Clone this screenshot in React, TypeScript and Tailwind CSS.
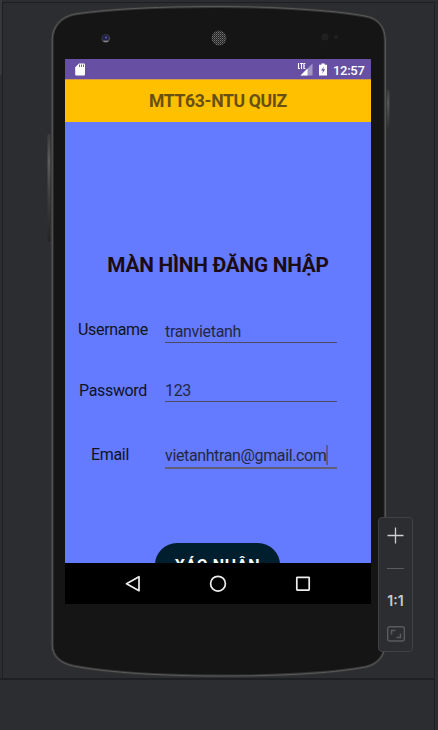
function PhoneBody() {
  return (
    <svg className="absolute inset-0" width="438" height="680" viewBox="0 0 438 680" fill="none" aria-hidden="true">
      <defs>
        <linearGradient id="leftKey" x1="0" y1="134" x2="0" y2="241" gradientUnits="userSpaceOnUse">
          <stop stopColor="#3a3a3a" />
          <stop offset=".25" stopColor="#5c5c5a" />
          <stop offset=".6" stopColor="#3c3c3c" />
          <stop offset="1" stopColor="#242424" />
        </linearGradient>
        <linearGradient id="rightKey" x1="0" y1="90" x2="0" y2="132" gradientUnits="userSpaceOnUse">
          <stop stopColor="#3c3c3c" />
          <stop offset=".3" stopColor="#555555" />
          <stop offset="1" stopColor="#292929" />
        </linearGradient>
        <pattern id="mesh" width="2" height="2" patternUnits="userSpaceOnUse">
          <rect width="2" height="2" fill="#242424" />
          <rect width="1" height="1" fill="#747474" />
          <rect x="1" y="1" width="1" height="1" fill="#4c4c4c" />
        </pattern>
      </defs>
      <rect x="47.500" y="134" width="3" height="107" rx="1" fill="url(#leftKey)" />
      <rect x="386" y="90" width="3.5" height="42" rx="1.5" fill="url(#rightKey)" />
      <path
        d="M52.200 40C52.200 27 60 17 75 14C112 8.500 166 6.500 218 6.500C271 6.500 334 10 365 16C378 18 385 27 385.300 40V642C385.300 656 378 664 366 667C329 674 275 676 218 676C166 676 110 673 73 666C60 663 52.200 656 52.200 645Z"
        fill="#151515"
        stroke="#353535"
        strokeWidth="3"
      />
      <path
        d="M52.200 40C52.200 27 60 17 75 14C112 8.500 166 6.500 218 6.500C271 6.500 334 10 365 16C378 18 385 27 385.300 40V642C385.300 656 378 664 366 667C329 674 275 676 218 676C166 676 110 673 73 666C60 663 52.200 656 52.200 645Z"
        stroke="#5a5a5a"
      />
      <circle cx="105.800" cy="38.500" r="4.300" fill="#48484c" />
      <circle cx="105.500" cy="38" r="3.300" fill="#202048" />
      <circle cx="106" cy="37.500" r="1" fill="#6666a8" />
      <path d="M103.500 41.200H108" stroke="#a0a09a" />
      <circle cx="219" cy="38" r="7.500" fill="url(#mesh)" />
      <circle cx="325" cy="37" r="3.500" fill="#202020" />
      <circle cx="336" cy="37" r="2" fill="#222222" />
    </svg>
  );
}

function StatusBar() {
  return (
    <div className="flex h-[20px] items-center bg-[#6750a3] pl-[10px] pr-[7px]">
      <svg width="11" height="13" viewBox="0 0 11 13" aria-hidden="true">
        <path d="M4 0.500H9Q10 0.500 10 1.500V11.500Q10 12.500 9 12.500H1.200Q.2 12.500 .2 11.500V4.300Z" fill="#fff" />
        <path d="M4.500 1.500V4M6.500 1.500V4M8.500 1.500V4" stroke="#6750a3" strokeWidth=".9" />
      </svg>
      <div className="ml-auto flex items-center">
        <svg width="16" height="14" viewBox="0 0 16 14" aria-hidden="true">
          <path d="M15.500 1.500V13.500H3.500Z" fill="#a596c8" />
          <path d="M10.500 6.500V13.500H3.500Z" fill="#fff" />
          <path d="M1.500 1V6.500H3M3 1.500H6M4.500 1V7M8.300 1.500H6.900V6.500H8.300M6.900 4H8" stroke="#fff" strokeWidth="1.100" fill="none" />
        </svg>
        <svg className="ml-[6px] mt-[1px]" width="8" height="13" viewBox="0 0 8 13" aria-hidden="true">
          <path d="M2.300 .5H5.700V1.700H8V12.500H0V1.700H2.300Z" fill="#fff" />
          <path d="M5 3.500L2 7.500H4L3.200 10.500L6.200 6.300H4.200Z" fill="#6750a3" />
        </svg>
        <span className="ml-[6px] mt-[2px] w-[31px] whitespace-nowrap text-[13px] font-medium leading-none tracking-[-0.300px] text-white">12:57</span>
      </div>
    </div>
  );
}

function FieldLabel({ text, className }: { text: string; className: string }) {
  return <label className={`w-[72px] shrink-0 text-center text-[16px] leading-[20px] tracking-[-0.340px] text-[#11131d] ${className}`}>{text}</label>;
}

function LoginScreen() {
  return (
    <main className="flex h-[441px] flex-col overflow-hidden bg-[#647bff] pt-[129px]">
      <h1 className="h-[28px] whitespace-nowrap text-center text-[20.800px] font-bold leading-[28px] tracking-[-0.260px] text-[#1c0b12]">MÀN HÌNH ĐĂNG NHẬP</h1>
      <div className="mt-[40px] flex h-[24px] pl-[12px]">
        <FieldLabel text="Username" className="mt-px" />
        <div className="ml-[16px] h-[24px] w-[172px] border-b border-[#4d4b64] text-[16px] leading-[25px] tracking-[-0.320px] text-[#24283f]">tranvietanh</div>
      </div>
      <div className="mt-[35px] flex h-[24px] pl-[12px]">
        <FieldLabel text="Password" className="mt-[3px]" />
        <div className="ml-[16px] h-[24px] w-[172px] border-b border-[#4d4b64] text-[16px] leading-[25px] tracking-[-0.320px] text-[#24283f]">123</div>
      </div>
      <div className="mt-[42px] flex h-[25px] pl-[9px]">
        <FieldLabel text="Email" className="mt-px" />
        <div className="ml-[19px] flex h-[25px] w-[172px] border-b-2 border-[#625d78] text-[16px] leading-[24px] tracking-[-0.370px] text-[#24283f]">
          <span className="w-[161px] whitespace-nowrap">vietanhtran@gmail.com</span>
          <span className="mt-[1px] h-[20px] w-[2px] shrink-0 bg-[#5b5c88]" />
        </div>
      </div>
      <button className="ml-[90px] mt-[74px] h-[44px] w-[125px] shrink-0 whitespace-nowrap rounded-full bg-[#001f2e] pt-px text-[16px] font-bold tracking-[0.700px] text-white">XÁC NHẬN</button>
    </main>
  );
}

function NavigationBar() {
  return (
    <nav className="h-[41px] bg-black">
      <svg width="306" height="41" viewBox="0 0 306 41" fill="none" stroke="#eee" strokeWidth="1.700" strokeLinejoin="round" aria-hidden="true">
        <path d="M61.500 20.700L74 13.700V27.700Z" />
        <circle cx="153" cy="20.700" r="7.400" />
        <rect x="231.800" y="14.300" width="12.400" height="12.800" rx=".5" />
      </svg>
    </nav>
  );
}

function ZoomControls() {
  return (
    <aside className="absolute left-[378px] top-[517px] flex h-[135px] w-[35px] flex-col items-center rounded-[4px] border border-[#404144] bg-[#2b2d30]">
      <svg className="mt-[9px]" width="17" height="17" viewBox="0 0 17 17" aria-hidden="true">
        <path d="M8.500 .5V16.500M.5 8.500H16.500" stroke="#ced0d6" strokeWidth="1.300" />
      </svg>
      <div className="mt-[24px] h-px w-[17px] bg-[#5a5b5e]" />
      <span className="mt-[24px] font-['Inter',sans-serif] text-[14px] font-semibold leading-[16px] text-[#c8cace]">1:1</span>
      <svg className="mt-[17px]" width="18" height="16" viewBox="0 0 18 16" fill="none" stroke="#5a5b5e" aria-hidden="true">
        <rect x=".7" y=".7" width="16.600" height="14.300" rx="2" strokeWidth="1.400" />
        <path d="M4.500 8.500V4.500H8.500M13.500 7.500V11.500H9.500" strokeWidth="1.500" />
      </svg>
    </aside>
  );
}

export default function App() {
  return (
    <div className="h-[730px] w-[438px] overflow-hidden bg-[#2b2d30]">
      <div className="relative flex h-[680px] w-[438px] pl-[65px] pt-[59px]">
        <div className="absolute inset-x-[2px] bottom-0 top-[2px] border-l border-t border-[#1e1f22]" />
        <div className="absolute bottom-0 left-0 h-[2px] w-[434px] bg-[#1e1f22]" />
        <div className="absolute left-[434px] top-[2px] h-[728px] w-px bg-[#1e1f22]" />
        <div className="absolute left-0 top-0 h-[75px] w-[2px] bg-[#35373a]" />
        <PhoneBody />
        <section className="relative h-[545px] w-[306px] font-['Roboto',sans-serif]">
          <StatusBar />
          <header className="h-[43px] border-t border-[#d59d45] bg-[#ffc000] text-center text-[17.600px] font-bold leading-[43px] tracking-[-0.350px] text-[#685014]">MTT63-NTU QUIZ</header>
          <LoginScreen />
          <NavigationBar />
        </section>
        <ZoomControls />
      </div>
    </div>
  );
}
